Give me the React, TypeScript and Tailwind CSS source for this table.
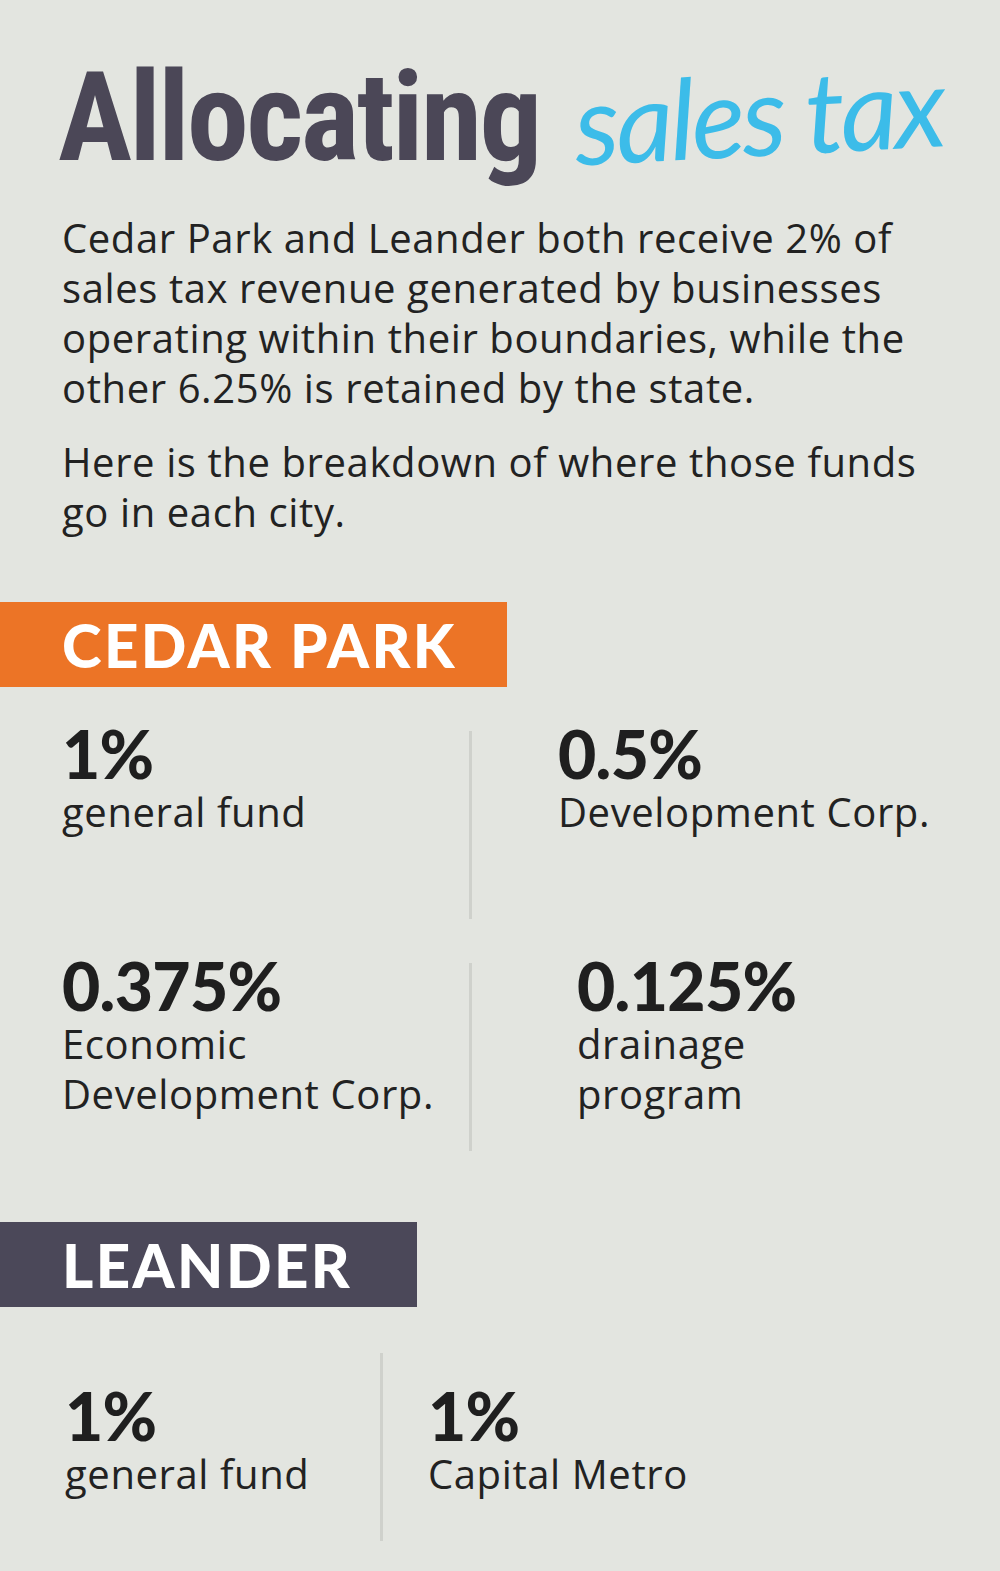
import React from 'react';

type StatProps = {
  value: string;
  lines: string[];
};

const Stat = ({ value, lines }: StatProps) => (
  <div>
    <div className="text-[66px] leading-[56px] font-black tracking-[-0.01em] text-[#1f1f1f] [font-family:Lato,'Open_Sans',sans-serif]">
      {value}
    </div>
    <div className="mt-[5px]">
      {lines.map((line) => (
        <div key={line} className="text-[40px] leading-[50px] tracking-[0.015em] text-[#222] whitespace-nowrap">
          {line}
        </div>
      ))}
    </div>
  </div>
);

const App = () => {
  return (
    <div className="w-[1000px] min-h-[1571px] bg-[#e3e5e0] [font-family:'Open_Sans','Noto_Sans',sans-serif] text-[#222] overflow-hidden">
      {/* Title */}
      <div className="flex items-baseline pl-[58px] pt-[54px]">
        <span className="text-[124px] leading-[127px] font-bold tracking-[-0.02em] text-[#4b4757] [font-family:'Roboto_Condensed','DejaVu_Sans_Condensed','Liberation_Sans_Narrow',Roboto,sans-serif]">
          Allocating
        </span>
        <span className="ml-[34px] text-[112px] leading-[104px] italic font-normal tracking-[-0.03em] text-[#3cbce9] [font-family:Lato,sans-serif] -rotate-3 translate-y-[-4px]">
          sales tax
        </span>
      </div>

      {/* Intro */}
      <div className="pl-[62px] mt-[32px] text-[40px] leading-[50px] tracking-[0.015em]">
        <p className="whitespace-nowrap">
          Cedar Park and Leander both receive 2% of
          <br />
          sales tax revenue generated by businesses
          <br />
          operating within their boundaries, while the
          <br />
          other 6.25% is retained by the state.
        </p>
        <p className="mt-[24px] whitespace-nowrap">
          Here is the breakdown of where those funds
          <br />
          go in each city.
        </p>
      </div>

      {/* Cedar Park */}
      <div className="mt-[65px] w-[507px] h-[85px] bg-[#ec7426] flex items-center pl-[62px]">
        <span className="text-[60px] leading-none font-black text-white tracking-[0.04em] [font-family:Lato,sans-serif]">
          CEDAR PARK
        </span>
      </div>

      <div className="mt-[44px] flex flex-col gap-[44px]">
        <div className="flex h-[188px]">
          <div className="w-[469px] pl-[62px] -mt-[5px]">
            <Stat value="1%" lines={['general fund']} />
          </div>
          <div className="w-[3px] bg-[#cfd1cc]" />
          <div className="pl-[86px] -mt-[5px]">
            <Stat value="0.5%" lines={['Development Corp.']} />
          </div>
        </div>
        <div className="flex h-[188px]">
          <div className="w-[469px] pl-[62px] -mt-[5px]">
            <Stat value="0.375%" lines={['Economic', 'Development Corp.']} />
          </div>
          <div className="w-[3px] bg-[#cfd1cc]" />
          <div className="pl-[105px] -mt-[5px]">
            <Stat value="0.125%" lines={['drainage', 'program']} />
          </div>
        </div>
      </div>

      {/* Leander */}
      <div className="mt-[71px] w-[417px] h-[85px] bg-[#4b4859] flex items-center pl-[62px]">
        <span className="text-[60px] leading-none font-black text-white tracking-[0.04em] [font-family:Lato,sans-serif]">
          LEANDER
        </span>
      </div>

      <div className="mt-[46px] flex h-[188px]">
        <div className="w-[380px] pl-[65px] pt-[35px]">
          <Stat value="1%" lines={['general fund']} />
        </div>
        <div className="w-[3px] bg-[#cfd1cc]" />
        <div className="pl-[45px] pt-[35px]">
          <Stat value="1%" lines={['Capital Metro']} />
        </div>
      </div>
    </div>
  );
};

export default App;
